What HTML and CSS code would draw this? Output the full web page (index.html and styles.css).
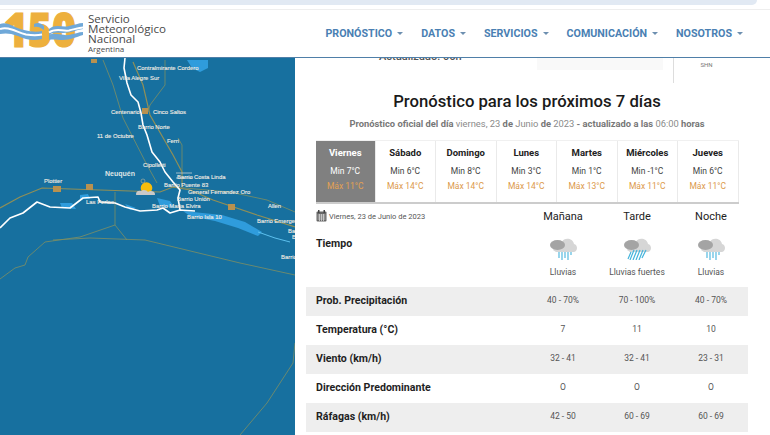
FILE: index.html
```html
<!DOCTYPE html>
<html lang="es">
<head>
<meta charset="utf-8">
<title>Pronóstico</title>
<link rel="stylesheet" href="styles.css">
</head>
<body>
<div class="urlbar"></div>
<header class="header">
  <div class="brand">
    <svg class="logo" viewBox="0 0 84 47" width="84" height="47" aria-hidden="true">
      <text x="4" y="37" class="logo-num" textLength="72" lengthAdjust="spacingAndGlyphs">150</text>
      <g transform="translate(0 -8)">
        <path d="M0 22 C8 19 14 26 24 28 C32 30 38 30 42 29 L42 37 C34 39 26 38 18 34 C10 31 5 31 0 32Z" fill="#6fa8d8"/>
        <path d="M0 27 C8 24 16 30 26 32.500 C32 33.500 38 33.500 42 32.500" fill="none" stroke="#fff" stroke-width="2"/>
        <path d="M34 22 C38 20 41 21 44 24 L44 28 C40 25 37 24 34 25Z" fill="#6fa8d8"/>
        <path d="M49 27 C56 21 62 26 69 24 C74 23 79 21 83 21 L83 27 C76 28 70 31 63 31 C57 31 53 30 49 33Z" fill="#6fa8d8"/>
        <path d="M49 30.500 C56 25.500 62 29.500 69 28.500 C74 27.500 79 25.500 83 25.500" fill="none" stroke="#fff" stroke-width="2"/>
        <path d="M49 33 C56 30 62 34 69 33 C74 32 79 30 83 30 L83 33 C76 35 70 38 63 38 C57 38 53 37 49 38Z" fill="#6fa8d8"/>
      </g>
    </svg>
    <div class="brand-text">
      <div class="brand-name">Servicio</div>
      <div class="brand-name">Meteorológico</div>
      <div class="brand-name">Nacional</div>
      <div class="brand-sub">Argentina</div>
    </div>
  </div>
  <nav class="nav">
    <a class="nav-item">PRONÓSTICO<span class="caret"></span></a>
    <a class="nav-item">DATOS<span class="caret"></span></a>
    <a class="nav-item">SERVICIOS<span class="caret"></span></a>
    <a class="nav-item">COMUNICACIÓN<span class="caret"></span></a>
    <a class="nav-item">NOSOTROS<span class="caret"></span></a>
  </nav>
</header>
<main class="main">
  <div class="map">
    <svg viewBox="0 58 295 377" width="295" height="377" aria-hidden="true">
      <rect x="0" y="58" width="295" height="377" fill="#17709f"/>
      <g fill="none" stroke="#7f8f63" stroke-width="0.8">
        <path d="M103 60 L113 85 L123 118 L147 165 L157 183"/>
        <path d="M165 60 L165 85 L150 105 L148 112"/>
        <path d="M182 172 L182 145 L178 138"/>
        <path d="M115 192 L115 225 L80 237 L45 242 L28 257 L25 265 L15 268 L0 279"/>
        <path d="M115 225 L127 240"/>
        <path d="M53 240 L90 238 L145 240 L240 263 L295 275"/>
        <path d="M295 343 L293 363 L267 403 L240 435"/>
        <path d="M173 187 L230 192 L267 200 L295 212"/>
      </g>
      <g fill="none" stroke="#8f8f58" stroke-width="1.200">
        <path d="M0 208 L20 197 L42 188 L100 190 L160 192 L173 187 L190 190 L213 200 L257 215 L295 227"/>
        <path d="M133 62 L143 85 L150 115 L173 155 L182 172 L182 187"/>
      </g>
      <path d="M187 60 L208 60 L208 68 L200 72 L192 68Z" fill="#2f9cdc"/>
      <g fill="#2f9cdc">
        <path d="M60 203 L72 203 L76 209 L62 208Z"/>
        <path d="M80 195 L88 194 L90 199 L80 199Z"/>
        <path d="M125 204 L136 208 L130 210Z"/>
        <path d="M157 198 L170 201 L175 208 L160 206Z"/>
        <path d="M183 211 L222 215 L245 222 L262 232 L258 236 L238 228 L215 221 L190 216Z"/>
      </g>
      <path d="M258 232 L275 238 L290 242" fill="none" stroke="#5cc0ee" stroke-width="1"/>
      <g fill="none" stroke="#fff" stroke-width="1.600" stroke-linejoin="round">
        <path d="M125 58 L124 68 L127 83 L131 95 L138 102 L141 113 L143 125 L147 135 L152 152 L160 162 L165 172 L173 182 L180 190 L178 198 L180 210"/>
        <path d="M0 228 L10 218 L23 213 L37 202 L50 207 L70 208 L83 198 L98 197 L100 202 L115 203 L125 207 L140 211 L157 210 L163 208 L170 213 L180 210 L195 211"/>
      </g>
      <g class="map-label">
        <text x="137" y="70">Contralmirante Cordero</text>
        <text x="119" y="80">Villa Alegre Sur</text>
        <text x="111" y="114">Centenario</text>
        <text x="153" y="114">Cinco Saltos</text>
        <text x="138" y="129">Barrio Norte</text>
        <text x="97" y="138">11 de Octubre</text>
        <text x="167" y="143">Ferri</text>
        <text x="143" y="167">Cipolletti</text>
        <text x="177" y="179">Barrio</text>
        <text x="194" y="179">Costa Linda</text>
        <text x="44" y="183">Plottier</text>
        <text x="164" y="187">Barrio Puente 83</text>
        <text x="188" y="194">General Fernandez Oro</text>
        <text x="86" y="204">Las Perlas</text>
        <text x="177" y="201">Barrio Unión</text>
        <text x="268" y="208">Allen</text>
        <text x="152" y="208">Barrio Maria Elvira</text>
        <text x="187" y="219">Barrio Isla 10</text>
        <text x="257" y="223">Barrio Emerge</text>
        <text x="288" y="233">Barrio</text>
        <text x="292" y="239">Barrio</text>
        <text x="281" y="259">Barrio</text>
      </g>
      <text x="105" y="176" class="map-city">Neuquén</text>
      <path d="M176 173 H192 M176 178 H192" stroke="#ddd" stroke-width="0.7"/>
      <g fill="#b8914f">
        <rect x="53" y="186" width="8" height="6"/>
        <rect x="86" y="184" width="7" height="6"/>
        <rect x="228" y="204" width="7" height="6"/>
        <rect x="142" y="108" width="6" height="6"/>
        <rect x="91" y="59" width="6" height="4"/>
      </g>
      <g>
        <circle cx="146.500" cy="188" r="5.800" fill="#f7bd0c"/>
        <path d="M136 194 C136 191 139 190 141 191 C143 189 147 190 148 192 C150 190 155 191 155 194 C155 194.500 155 194.700 154.800 195 L136.200 195Z" fill="#c9c9c9"/>
        <circle cx="143" cy="181" r="2" fill="none" stroke="#b9b39a" stroke-width="0.6"/>
      </g>
    </svg>
  </div>
  <section class="content">
    <div class="stub">
      <div class="stub-updated">Actualizado: 06h</div>
      <div class="stub-panel"></div>
      <div class="stub-side">SHN</div>
    </div>
    <h1 class="title">Pronóstico para los próximos 7 días</h1>
    <p class="subtitle">Pronóstico oficial del día <span class="light">viernes, 23</span> de <span class="light">Junio</span> de <span class="light">2023</span> - actualizado a las <span class="light">06:00</span> horas</p>
    <div class="days">
      <div class="day day-active"><div class="day-name">Viernes</div><div class="day-min">Min 7°C</div><div class="day-max">Máx 11°C</div></div>
      <div class="day"><div class="day-name">Sábado</div><div class="day-min">Min 6°C</div><div class="day-max">Máx 14°C</div></div>
      <div class="day"><div class="day-name">Domingo</div><div class="day-min">Min 8°C</div><div class="day-max">Máx 14°C</div></div>
      <div class="day"><div class="day-name">Lunes</div><div class="day-min">Min 3°C</div><div class="day-max">Máx 14°C</div></div>
      <div class="day"><div class="day-name">Martes</div><div class="day-min">Min 1°C</div><div class="day-max">Máx 13°C</div></div>
      <div class="day"><div class="day-name">Miércoles</div><div class="day-min">Min -1°C</div><div class="day-max">Máx 11°C</div></div>
      <div class="day"><div class="day-name">Jueves</div><div class="day-min">Min 6°C</div><div class="day-max">Máx 11°C</div></div>
    </div>
    <div class="table">
      <div class="row row-head">
        <div class="date">
          <svg class="cal" viewBox="0 0 11 12" width="11" height="12" aria-hidden="true">
            <rect x="0.500" y="1.500" width="10" height="10" rx="1" fill="#666"/>
            <rect x="2" y="0" width="1.500" height="3" fill="#444"/>
            <rect x="7.500" y="0" width="1.500" height="3" fill="#444"/>
            <path d="M1.500 5H9.500M1.500 7H9.500M1.500 9H9.500M3.500 4V11M5.500 4V11M7.500 4V11" stroke="#ddd" stroke-width="0.7"/>
          </svg>
          <span>Viernes, 23 de Junio de 2023</span>
        </div>
        <div class="col-head">Mañana</div>
        <div class="col-head">Tarde</div>
        <div class="col-head">Noche</div>
      </div>
      <div class="row row-weather">
        <div class="row-label">Tiempo</div>
        <div class="wx">
          <svg viewBox="0 0 28 24" width="28" height="24" aria-hidden="true">
            <path d="M4 14 C6 7 11 8 13 6 C15 1 24 2 25 8 C29 9 29 15 25 16 L7 16Z" fill="#d6d6d6"/>
            <ellipse cx="8.500" cy="9" rx="7.500" ry="5" fill="#a4a4a4"/>
            <path d="M10 16V22M13 16V24M16 16V22M19 16V24M22 16V19" stroke="#45b4dc" stroke-width="1.100"/>
          </svg>
          <div class="wx-text">Lluvias</div>
        </div>
        <div class="wx">
          <svg viewBox="0 0 28 24" width="28" height="24" aria-hidden="true">
            <path d="M4 14 C6 7 11 8 13 6 C15 1 24 2 25 8 C29 9 29 15 25 16 L7 16Z" fill="#d6d6d6"/>
            <ellipse cx="8.500" cy="9" rx="7.500" ry="5" fill="#a4a4a4"/>
            <path d="M8 16L5 23M11 14L7 24M14 14L10 24M17 14L13 24M20 14L16 24M23 14L19 22" stroke="#45b4dc" stroke-width="1.200"/>
          </svg>
          <div class="wx-text">Lluvias fuertes</div>
        </div>
        <div class="wx">
          <svg viewBox="0 0 28 24" width="28" height="24" aria-hidden="true">
            <path d="M4 14 C6 7 11 8 13 6 C15 1 24 2 25 8 C29 9 29 15 25 16 L7 16Z" fill="#d6d6d6"/>
            <ellipse cx="8.500" cy="9" rx="7.500" ry="5" fill="#a4a4a4"/>
            <path d="M10 16V22M13 16V24M16 16V22M19 16V24M22 16V19" stroke="#45b4dc" stroke-width="1.100"/>
          </svg>
          <div class="wx-text">Lluvias</div>
        </div>
      </div>
      <div class="row row-data row-alt"><div class="row-label">Prob. Precipitación</div><div class="val">40 - 70%</div><div class="val">70 - 100%</div><div class="val">40 - 70%</div></div>
      <div class="row row-data"><div class="row-label">Temperatura (°C)</div><div class="val">7</div><div class="val">11</div><div class="val">10</div></div>
      <div class="row row-data row-alt"><div class="row-label">Viento (km/h)</div><div class="val">32 - 41</div><div class="val">32 - 41</div><div class="val">23 - 31</div></div>
      <div class="row row-data"><div class="row-label">Dirección Predominante</div><div class="val">O</div><div class="val">O</div><div class="val">O</div></div>
      <div class="row row-data row-alt"><div class="row-label">Ráfagas (km/h)</div><div class="val">42 - 50</div><div class="val">60 - 69</div><div class="val">60 - 69</div></div>
    </div>
  </section>
</main>
</body>
</html>
```
FILE: styles.css
```css
* { box-sizing: border-box; }
html, body { margin: 0; padding: 0; height: 100%; }
body {
  width: 770px;
  height: 435px;
  overflow: hidden;
  background: #fff;
  font-family: Roboto, "Liberation Sans", sans-serif;
  color: #222;
}
.urlbar {
  width: 757px;
  height: 5px;
  background: #e1e9f3;
  border-radius: 0 0 8px 0;
}
.header {
  height: 49px;
  margin-top: 4px;
  border-top: 1px solid #eee;
  border-bottom: 1px solid #4f7fa8;
  display: flex;
  align-items: center;
  justify-content: space-between;
}
.brand { display: flex; align-items: center; height: 100%; }
.logo { display: block; }
.logo-num {
  font-family: "Open Sans", sans-serif;
  font-weight: 800;
  font-size: 48px;
  fill: #edb03d;
  stroke: #edb03d;
  stroke-width: 1.2px;
}
.brand-text { margin-left: 4px; color: #4a4a4a; font-family: "Open Sans", sans-serif; }
.brand-name { font-size: 11.600px; line-height: 10px; }
.brand-sub { font-size: 8px; line-height: 10px; }
.nav { display: flex; margin-right: 27px; gap: 18px; }
.nav-item {
  color: #4a7fb3;
  font-size: 10.700px;
  font-weight: 700;
  display: flex;
  align-items: center;
}
.caret {
  width: 0;
  height: 0;
  margin-left: 5px;
  border-left: 3px solid transparent;
  border-right: 3px solid transparent;
  border-top: 3px solid #6d8fb0;
}
.main { display: flex; height: 377px; overflow: hidden; }
.map { width: 295px; flex: none; }
.map svg { display: block; }
.map-label {
  font-family: "Liberation Sans", sans-serif;
  font-size: 5.900px;
  fill: #f2ece4;
  stroke: #f2ece4;
  stroke-width: 0.12px;
}
.map-city {
  font-family: "Liberation Sans", sans-serif;
  font-size: 7px;
  font-weight: 700;
  fill: #dfe5e6;
}
.content { flex: 1; min-width: 0; padding-left: 11px; padding-right: 22px; }
.stub { height: 25px; display: flex; overflow: hidden; color: #555; }
.stub-updated {
  width: 73px;
  margin-left: 73px;
  margin-top: -8px;
  font-size: 11px;
  font-weight: 500;
  white-space: nowrap;
}
.stub-panel {
  width: 126px;
  height: 12px;
  margin-left: 85px;
  background: #f9f9f9;
}
.stub-side {
  margin-left: 10px;
  width: 66px;
  border-left: 1px solid #ddd;
  text-align: center;
  font-size: 6px;
  padding-top: 3px;
  color: #777;
  margin-right: -60px;
  flex: none;
}
.title {
  margin: 9px 0 0;
  height: 20px;
  text-align: center;
  font-size: 16.700px;
  line-height: 20px;
  font-weight: 500;
  color: #1a1a1a;
}
.subtitle {
  margin: 5px 0 0;
  height: 14px;
  line-height: 14px;
  text-align: center;
  font-size: 9.350px;
  font-weight: 700;
  color: #777;
}
.light { font-weight: 400; color: #8a8a8a; }
.days {
  display: grid;
  grid-template-columns: 59.500px repeat(6, 60.500px);
  width: 423px;
  margin: 9px 0 0 10px;
  height: 64px;
  border-bottom: 2px solid #ccc;
  border-top: 1px solid #f0f0f0;
}
.day {
  text-align: center;
  border-right: 1px solid #eaeaea;
  font-size: 8.500px;
  color: #333;
  padding-top: 5px;
}
.day-name { font-size: 9.500px; font-weight: 700; line-height: 14px; color: #222; }
.day-min { margin-top: 4px; line-height: 14px; color: #444; }
.day-max { margin-top: 1px; line-height: 14px; color: #dc9a4c; }
.day-active { background: #808080; color: #fff; }
.day-active .day-name, .day-active .day-min { color: #fff; }
.day-active .day-max { color: #e3a152; }
.table { width: 442px; margin-top: 1px; }
.row {
  display: grid;
  grid-template-columns: 220px repeat(3, 74px);
  align-items: center;
}
.row-head { height: 20px; padding-top: 2px; }
.date { display: flex; align-items: center; gap: 2px; padding-left: 10px; font-size: 7.500px; color: #555; }
.cal { display: block; }
.col-head { text-align: center; font-size: 11px; color: #222; }
.row-weather { height: 62px; align-items: start; }
.row-weather .row-label { padding-top: 11px; }
.row-label { padding-left: 10px; font-size: 10.600px; font-weight: 700; color: #1f1f1f; line-height: 16px; }
.wx { text-align: center; padding-top: 11px; }
.wx svg { display: block; margin: 0 auto; }
.wx-text { font-size: 8.500px; color: #555; line-height: 10px; margin-top: 7px; }
.row-data { height: 29px; padding-bottom: 1px; }
.row-alt { background: #eeeeee; }
.val { text-align: center; font-size: 8.500px; color: #555; padding-bottom: 2px; }
```
